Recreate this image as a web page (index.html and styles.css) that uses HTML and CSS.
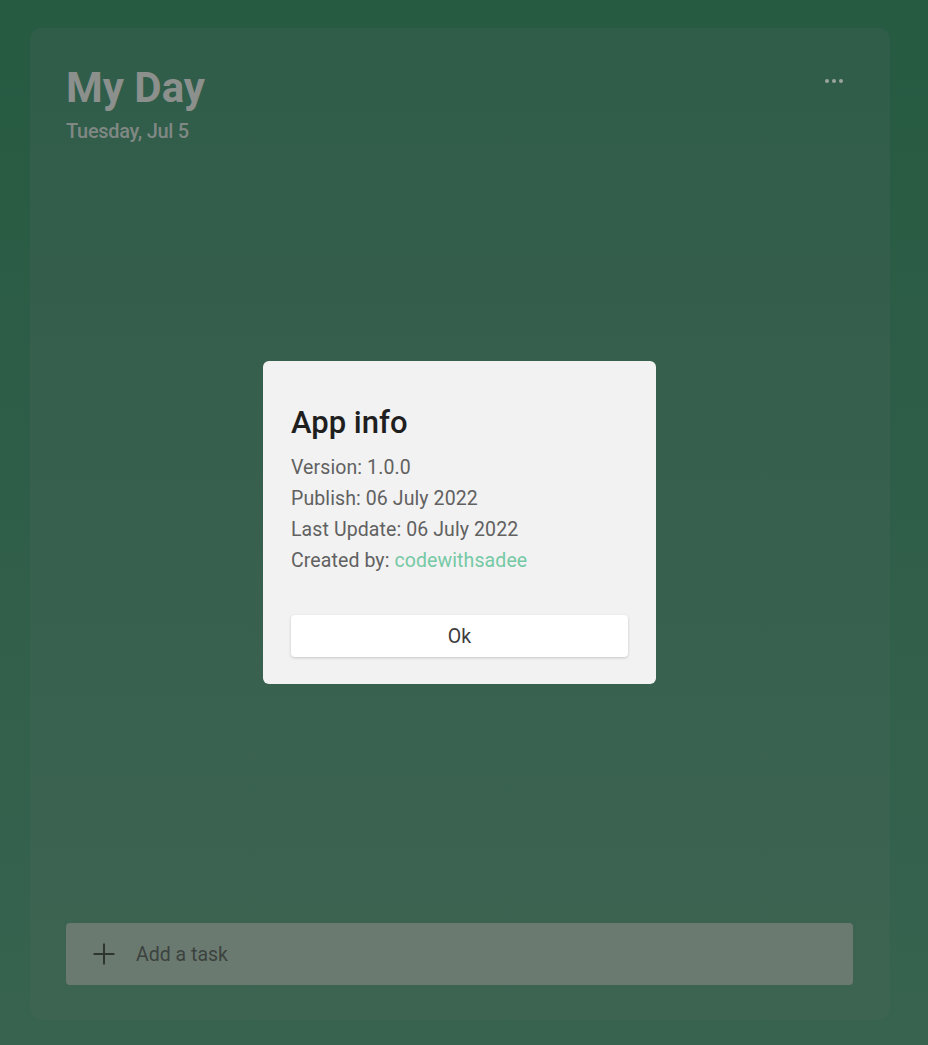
FILE: index.html
```html
<!DOCTYPE html>
<html lang="en">
<head>
<meta charset="utf-8">
<title>My Day</title>
<link rel="stylesheet" href="styles.css">
</head>
<body>
<main class="card">
  <header class="header">
    <div class="heading">
      <h1 class="title">My Day</h1>
      <p class="date">Tuesday, Jul 5</p>
    </div>
    <button class="more" aria-label="More options">
      <span class="dot"></span><span class="dot"></span><span class="dot"></span>
    </button>
  </header>
  <div class="tasks"></div>
  <div class="add-task">
    <svg class="plus" width="24" height="24" viewBox="0 0 24 24" aria-hidden="true">
      <path d="M12 1.5V22.5M1.5 12H22.5" stroke="#2e3430" stroke-width="2" fill="none"/>
    </svg>
    <span class="add-label">Add a task</span>
  </div>

  <div class="overlay">
    <section class="dialog" role="dialog" aria-labelledby="dlg-title">
      <h2 class="dialog-title" id="dlg-title">App info</h2>
      <ul class="info">
        <li>Version: 1.0.0</li>
        <li>Publish: 06 July 2022</li>
        <li>Last Update: 06 July 2022</li>
        <li>Created by: <a class="link" href="#">codewithsadee</a></li>
      </ul>
      <button class="ok">Ok</button>
    </section>
  </div>
</main>
</body>
</html>
```

FILE: styles.css
```css
* { box-sizing: border-box; }

html, body {
  margin: 0;
  height: 100%;
}

body {
  font-family: Roboto, "Liberation Sans", Arial, sans-serif;
  background: linear-gradient(180deg, #265a41 0%, #2f5e48 45%, #37634f 100%);
  padding: 28px 38px 25px 30px;
  height: 1045px;
}

.card {
  position: relative;
  height: 992px;
  border-radius: 12px;
  background: linear-gradient(180deg, #2f5d49 0%, #375f4d 40%, #3c6451 100%);
  padding: 37px 37px 35px 36px;
  display: flex;
  flex-direction: column;
}

.header {
  display: flex;
  justify-content: space-between;
  align-items: flex-start;
}

.title {
  margin: 0;
  font-size: 42px;
  font-weight: 700;
  line-height: 46px;
  color: #8b908d;
}

.date {
  margin: 9px 0 0;
  font-size: 20px;
  font-weight: 500;
  color: #808884;
  line-height: 22px;
  letter-spacing: -0.3px;
}

.more {
  display: flex;
  gap: 3px;
  border: 0;
  background: none;
  padding: 0;
  margin: 14px 10px 0 0;
}

.dot {
  width: 4px;
  height: 4px;
  border-radius: 50%;
  background: #9aa59f;
}

.tasks { flex: 1; }

.add-task {
  height: 62px;
  border-radius: 4px;
  background: #6b7a70;
  display: flex;
  align-items: center;
  padding: 0 26px;
  gap: 20px;
}

.add-label {
  font-size: 19.5px;
  color: #3b423e;
}

.overlay {
  position: absolute;
  inset: 0;
  display: flex;
  align-items: center;
  justify-content: center;
}

.dialog {
  width: 393px;
  height: 323px;
  margin-top: -3px;
  margin-left: -1px;
  background: #f2f2f2;
  border-radius: 6px;
  padding: 42px 28px 0 28px;
  display: flex;
  flex-direction: column;
}

.dialog-title {
  margin: 0;
  font-size: 31px;
  font-weight: 500;
  line-height: 40px;
  color: #1f1f1f;
}

.info {
  list-style: none;
  margin: 9px 0 0;
  padding: 0;
  font-size: 19.5px;
  letter-spacing: 0.1px;
  line-height: 31px;
  color: #616161;
}

.link {
  color: #75c9a4;
  text-decoration: none;
}

.ok {
  margin-top: 39px;
  height: 42px;
  width: 100%;
  border: 0;
  border-radius: 4px;
  background: #ffffff;
  box-shadow: 0 1px 3px rgba(0,0,0,0.18);
  font-family: inherit;
  font-size: 19.5px;
  color: #3c3c3c;
}
```
